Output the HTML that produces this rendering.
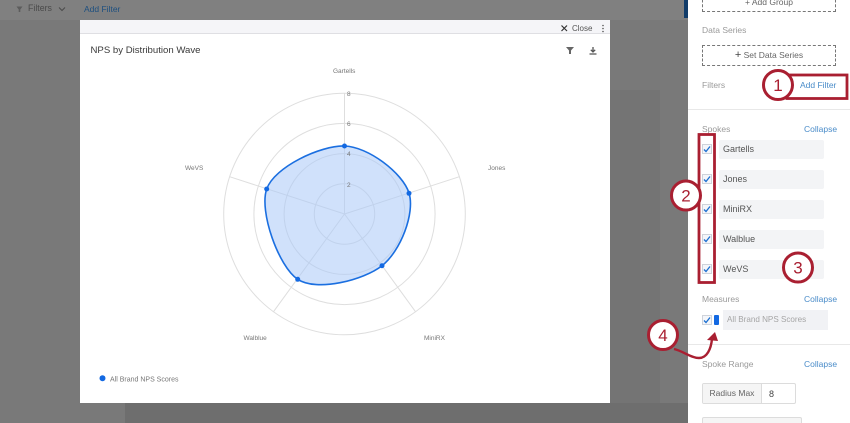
<!DOCTYPE html>
<html>
<head>
<meta charset="utf-8">
<style>
html,body{margin:0;padding:0;width:850px;height:423px;overflow:hidden}
body{position:relative;background:#797979;font-family:"Liberation Sans",sans-serif}
#wrap{position:absolute;left:0;top:0;width:850px;height:423px;overflow:hidden;filter:blur(.35px)}
.a{position:absolute;white-space:nowrap}
.lbl{font-size:8.5px;color:#9a9a9a}
.link{font-size:8.5px;color:#4a8cc9}
.row{position:absolute;left:719px;width:105px;height:19px;background:#f3f4f6;border-radius:2px;font-size:9px;color:#555;line-height:19px;text-indent:4px}
.cb{position:absolute;left:702px;width:8px;height:8px;border:1px solid #cfd3da;background:#f4f6fa}
.cb svg{position:absolute;left:0;top:0}
.dash{position:absolute;left:702px;width:132px;border:1px dashed #777;text-align:center;font-size:8.5px;color:#666}
</style>
</head>
<body>
<div id="wrap">
<div class="a" style="left:0;top:0;width:688px;height:20px;background:#808080"></div>
<div class="a" style="left:610px;top:90px;width:50px;height:313px;background:#747474"></div>
<div class="a" style="left:125px;top:403px;width:563px;height:20px;background:#6e6e6e"></div>
<div class="a" style="left:684px;top:0;width:4px;height:18px;background:#123c69"></div>
<svg class="a" style="left:15px;top:5px" width="10" height="8"><path d="M1.500 1.500h6L5.300 4.500V7H3.700V4.500Z" fill="#5c5c5c"/></svg>
<div class="a" style="left:28px;top:3px;font-size:8.800px;color:#4a4a4a">Filters</div>
<svg class="a" style="left:58px;top:6px" width="8" height="6"><path d="M1 1.500 4 4.500 7 1.500" fill="none" stroke="#4a4a4a" stroke-width="1"/></svg>
<div class="a" style="left:84px;top:4px;font-size:8.500px;color:#1d4f7f">Add Filter</div>

<!-- modal -->
<div class="a" style="left:80px;top:20px;width:530px;height:383px;background:#fff"></div>
<div class="a" style="left:80px;top:20px;width:530px;height:13px;background:#f5f5f8;border-bottom:1px solid #dfdfe3"></div>
<svg class="a" style="left:560px;top:24px" width="9" height="9"><path d="M1.500 1.500 7 7M7 1.500 1.500 7" stroke="#333" stroke-width="1.200"/></svg>
<div class="a" style="left:572px;top:24px;font-size:8px;color:#555">Close</div>
<svg class="a" style="left:600px;top:24px" width="6" height="10"><circle cx="3" cy="1.500" r=".8" fill="#555"/><circle cx="3" cy="4.500" r=".8" fill="#555"/><circle cx="3" cy="7.500" r=".8" fill="#555"/></svg>
<div class="a" style="left:90.500px;top:45px;font-size:9.600px;color:#3a3a3a">NPS by Distribution Wave</div>
<svg class="a" style="left:565px;top:46px" width="10" height="9"><path d="M1 1h8L6 4.500V8H4V4.500Z" fill="#666"/></svg>
<svg class="a" style="left:588px;top:46px" width="10" height="10"><path d="M5 1v4.500M2.800 3.800 5 6 7.200 3.800M1.500 8h7" fill="none" stroke="#555" stroke-width="1.300"/></svg>

<!-- chart -->
<svg class="a" style="left:0;top:0" width="850" height="423">
<g fill="none" stroke="#dedede" stroke-width="1">
<circle cx="344.500" cy="214" r="30.200"/>
<circle cx="344.500" cy="214" r="60.400"/>
<circle cx="344.500" cy="214" r="90.600"/>
<circle cx="344.500" cy="214" r="120.800"/>
<path d="M344.500 214V93.200M344.500 214 459.400 176.700M344.500 214 415.500 311.700M344.500 214 273.500 311.700M344.500 214 229.600 176.700"/>
</g>
<path d="M344.500 146C368.200 146.700 402.700 173 409 193C415.300 213 400.500 251.300 382 265.700C363.500 280.100 316.900 292.100 297.700 279.300C278.500 266.500 258.900 211.200 266.700 189C274.500 166.800 320.800 145.300 344.500 146Z" fill="#a9c8f7" fill-opacity=".55" stroke="#1b6fe0" stroke-width="1.600"/>
<g fill="#1369e2">
<circle cx="344.500" cy="146" r="2.500"/><circle cx="409" cy="193.300" r="2.500"/><circle cx="382" cy="265.700" r="2.500"/><circle cx="297.700" cy="279.300" r="2.500"/><circle cx="266.700" cy="189" r="2.500"/>
</g>
<g font-family="Liberation Sans, sans-serif" font-size="6.500" fill="#777">
<text x="347" y="96">8</text><text x="347" y="126">6</text><text x="347" y="156">4</text><text x="347" y="187">2</text>
<text x="333" y="73">Gartells</text><text x="488" y="170">Jones</text><text x="424" y="340">MiniRX</text><text x="243.500" y="340">Walblue</text><text x="185" y="170">WeVS</text>
</g>
<circle cx="102.500" cy="378.300" r="3" fill="#1369e2"/>
<text x="110" y="381.500" font-family="Liberation Sans, sans-serif" font-size="7" fill="#777">All Brand NPS Scores</text>
</svg>

<!-- panel -->
<div class="a" style="left:688px;top:0;width:162px;height:423px;background:#fff"></div>
<div class="dash" style="top:-10px;height:20px;line-height:23px">+ Add Group</div>
<div class="a lbl" style="left:702px;top:25px">Data Series</div>
<div class="dash" style="top:45px;height:19px;line-height:19px"><span style="font-size:11px;color:#444">+</span> Set Data Series</div>
<div class="a lbl" style="left:702px;top:80px">Filters</div>
<div class="a link" style="left:800px;top:80px">Add Filter</div>
<div class="a" style="left:688px;top:109px;width:162px;height:1px;background:#e8e8e8"></div>
<div class="a lbl" style="left:702px;top:124px">Spokes</div>
<div class="a link" style="left:804px;top:124px">Collapse</div>
<div class="row" style="top:140px">Gartells</div>
<div class="row" style="top:170px">Jones</div>
<div class="row" style="top:200px">MiniRX</div>
<div class="row" style="top:230px">Walblue</div>
<div class="row" style="top:260px">WeVS</div>
<div class="cb" style="top:144px"><svg width="8" height="8"><path d="M1 4.500 3 6.500 7 1.500" fill="none" stroke="#1b6fd0" stroke-width="1.300"/></svg></div>
<div class="cb" style="top:174px"><svg width="8" height="8"><path d="M1 4.500 3 6.500 7 1.500" fill="none" stroke="#1b6fd0" stroke-width="1.300"/></svg></div>
<div class="cb" style="top:204px"><svg width="8" height="8"><path d="M1 4.500 3 6.500 7 1.500" fill="none" stroke="#1b6fd0" stroke-width="1.300"/></svg></div>
<div class="cb" style="top:234px"><svg width="8" height="8"><path d="M1 4.500 3 6.500 7 1.500" fill="none" stroke="#1b6fd0" stroke-width="1.300"/></svg></div>
<div class="cb" style="top:264px"><svg width="8" height="8"><path d="M1 4.500 3 6.500 7 1.500" fill="none" stroke="#1b6fd0" stroke-width="1.300"/></svg></div>
<div class="a lbl" style="left:702px;top:294px">Measures</div>
<div class="a link" style="left:804px;top:294px">Collapse</div>
<div class="cb" style="top:315px"><svg width="8" height="8"><path d="M1 4.500 3 6.500 7 1.500" fill="none" stroke="#1b6fd0" stroke-width="1.300"/></svg></div>
<div class="a" style="left:714px;top:315px;width:5px;height:9.500px;background:#1369e2;border-radius:1px"></div>
<div class="a" style="left:723px;top:310px;width:105px;height:20px;background:#f1f2f5;font-size:8.100px;color:#a5a5a5;line-height:20px;text-indent:4px">All Brand NPS Scores</div>
<div class="a" style="left:688px;top:344px;width:162px;height:1px;background:#e8e8e8"></div>
<div class="a lbl" style="left:702px;top:359px">Spoke Range</div>
<div class="a link" style="left:804px;top:359px">Collapse</div>
<div class="a" style="left:702px;top:383px;width:92px;height:19px;border:1px solid #dcdcdc;border-radius:2px;overflow:hidden">
  <div class="a" style="left:0;top:0;width:58px;height:19px;background:#f5f5f5;border-right:1px solid #dcdcdc;font-size:8.500px;color:#666;line-height:18px;text-align:center">Radius Max</div>
  <div class="a" style="left:66px;top:0;font-size:9px;color:#444;line-height:20px">8</div>
</div>
<div class="a" style="left:702px;top:417px;width:98px;height:6px;border:1px solid #dcdcdc;border-bottom:0;background:#f5f5f5;border-radius:2px 2px 0 0"></div>

<!-- annotations -->
<svg class="a" style="left:0;top:0" width="850" height="423">
<g fill="none" stroke="#a91f31" stroke-width="2.800">
<rect x="787" y="75" width="60" height="23.500"/>
<rect x="699" y="134.500" width="15.500" height="148"/>
<circle cx="778" cy="85" r="14.500" fill="#fff" stroke-width="3"/>
<circle cx="686" cy="195.500" r="14.500" fill="#fff" stroke-width="3"/>
<circle cx="798" cy="267.500" r="14.500" fill="#fff" stroke-width="3"/>
<circle cx="663" cy="335" r="14.500" fill="#fff" stroke-width="3"/>
<path d="M674 349C683 351 691 358 699 358C707 358 711 349 712 339" stroke-width="2.400"/>
</g>
<path d="M707 340 715 332 718 341Z" fill="#a91f31"/>
<g font-family="Liberation Sans, sans-serif" font-size="17" fill="#a91f31" text-anchor="middle">
<text x="778" y="91">1</text><text x="686" y="201.500">2</text><text x="798" y="273.500">3</text><text x="663" y="341">4</text>
</g>
</svg>
</div>
</body>
</html>
